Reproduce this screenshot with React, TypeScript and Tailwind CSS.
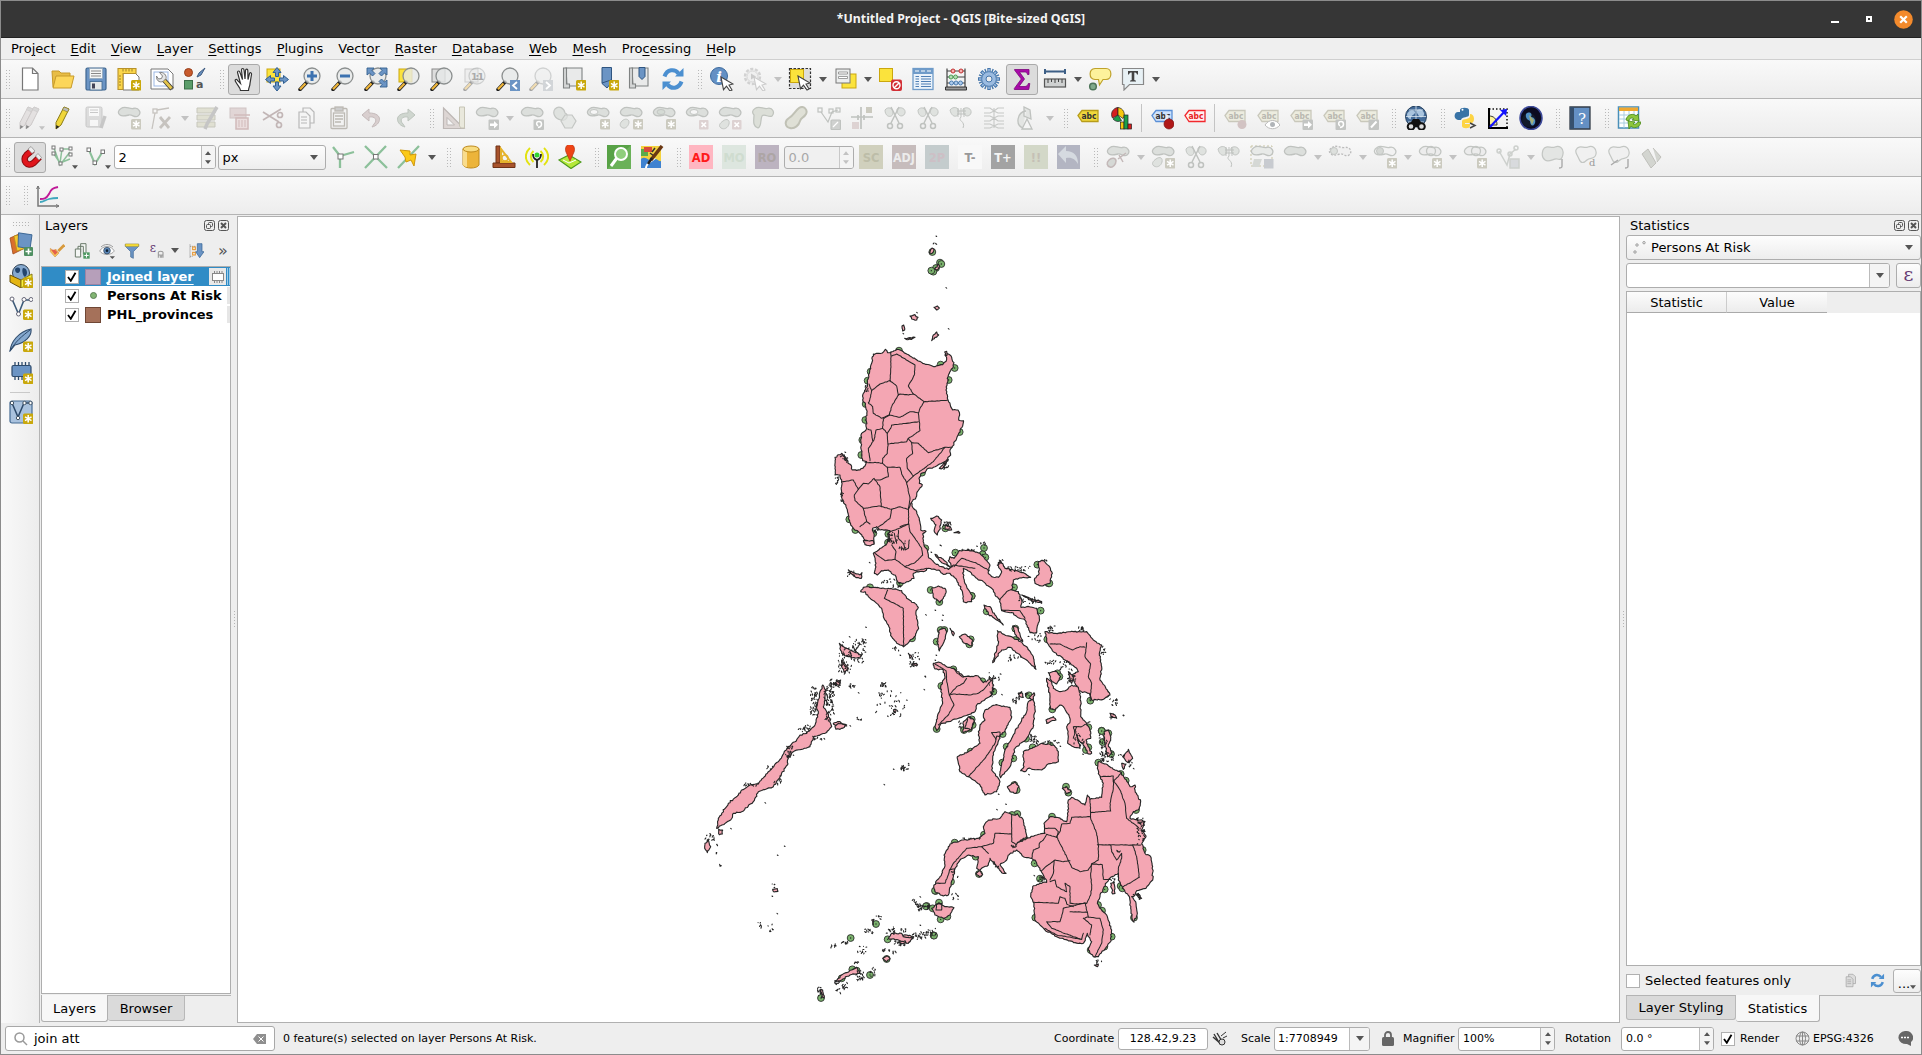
import React from "react";
import type { ReactNode } from "react";

/* ------------------------------------------------------------------ icons */

const Star = ({ x = 14, y = 13, c = "#c9a80c" }: { x?: number; y?: number; c?: string }) => (
  <g>
    <rect x={x} y={y} width="10.5" height="10.5" rx="1.5" fill={c} />
    <path
      d={`M${x + 5.2} ${y + 1.6}v7.4M${x + 2} ${y + 3.4}l6.5 3.8M${x + 8.5} ${y + 3.4}l-6.5 3.8`}
      stroke="#fff"
      strokeWidth="1.5"
    />
  </g>
);
const GB = "#cbcabf";
const Cross = () => (
  <g>
    <rect x="14" y="14" width="9.5" height="9.5" rx="1" fill="#ddd2d2" />
    <path d="M16.5 16.5l4.500 4.500M21 16.5l-4.500 4.500" stroke="#fff" strokeWidth="1.700" />
  </g>
);
const GArrow = ({ kind }: { kind: "move" | "rot" | "pen" }) => (
  <g>
    <rect x="13.500" y="13.500" width="10.500" height="10.500" rx="1" fill="#c3c5c3" />
    {kind === "move" && <path d="M15 17.500h4v-2.500l4 3.800-4 3.800v-2.500h-4z" fill="#fff" />}
    {kind === "rot" && <path d="M18 21.500c5-1 4-6 1-6s-3 3-1 4.500" stroke="#fff" strokeWidth="1.500" fill="none" />}
    {kind === "pen" && <path d="M16 21.500l5.500-6" stroke="#fff" strokeWidth="2" />}
  </g>
);
const Mag = ({ children, dim, x = 0 }: { children?: ReactNode; dim?: boolean; x?: number }) => (
  <g transform={`translate(${x} 0)`} opacity={dim ? 0.35 : 1}>
    <path d="M9 15L2 22.500" stroke="#222" strokeWidth="3.500" strokeLinecap="round" />
    <path d="M7.500 16.500L2 22.300" stroke="#f0b63a" strokeWidth="2.200" />
    <circle cx="14" cy="9" r="8" fill="#e6e8e8" stroke="#8b8f8f" strokeWidth="1.300" fillOpacity=".8" />
    {children}
  </g>
);
const BLOB = "M4 2.500C8-.5 12 3 16 2.500C22 1 25 7 21 10C18 12.500 15 8 12 9C8 10 5 11 3 9C.5 7 1 4.500 4 2.500Z";
const Blob = ({ children, fill = "#dcdfdc" }: { children?: ReactNode; fill?: string }) => (
  <g>
    <path d={BLOB} fill={fill} stroke="#bfc2bf" strokeWidth="1.300" />
    {children}
  </g>
);
const Tag = ({ f = "#ececdf", s = "#c9c8bb", t = "#b9b8b0", x = 0 }: { f?: string; s?: string; t?: string; x?: number }) => (
  <g transform={`translate(${x} 0)`}>
    <path d="M2 9.500L6 4.500h16v11H6z" fill={f} stroke={s} strokeWidth="1.300" />
    <text x="5.500" y="13" fontSize="8.500" fontWeight="bold" fill={t} fontFamily="DejaVu Sans" textLength="15" lengthAdjust="spacingAndGlyphs">abc</text>
  </g>
);
const Cursor = ({ x = 11, y = 10, s = "#444" }: { x?: number; y?: number; s?: string }) => (
  <path transform={`translate(${x} ${y})`} d="M0 0l12 7-4 1 3 5-2 1-3.500-4.800-3 3.500z" fill="#fff" stroke={s} strokeWidth="1.100" />
);
const Scissors = () => (
  <g fill="none" stroke="#bfc2bf" strokeWidth="1.500">
    <path d="M8 1l8 16M16 1L8 17" />
    <circle cx="7" cy="20" r="2.500" />
    <circle cx="17" cy="20" r="2.500" />
  </g>
);
const Refresh = ({ c = "#4b8fd0" }: { c?: string }) => (
  <g fill="none" stroke={c} strokeWidth="4">
    <path d="M3.500 9.500C6 2 14 1.500 17.500 6.500" />
    <path d="M20.500 14.500C18 22 10 22.500 6.500 17.500" />
    <path d="M14 9.500h8.500V1z" fill={c} stroke="none" />
    <path d="M10 14.500H1.500V23z" fill={c} stroke="none" />
  </g>
);
const Letter = ({ bg, c, t }: { bg: string; c: string; t: string }) => (
  <g>
    <rect width="24" height="24" fill={bg} />
    <text x="12" y="16.500" fontSize="11.500" fontWeight="bold" fill={c} textAnchor="middle" fontFamily="DejaVu Sans" textLength={t.length > 2 ? 22 : undefined} lengthAdjust="spacingAndGlyphs">{t}</text>
  </g>
);
const Roll = () => (
  <g fill="#e9eaea" stroke="#7f8282" strokeWidth="1.100">
    <path d="M4 1h16v18h-15z" />
    <path d="M1.500 1h3v16h3v4h-6z" fill="#d4d6d6" />
  </g>
);
const Pencil = ({ c = "#f0d63a", d = "#8a7a14", x = 0 }: { c?: string; d?: string; x?: number }) => (
  <g transform={`translate(${x} 0)`}>
    <path d="M13 1l5 2-8 16-5 4 0-6.500z" fill={c} stroke={d} strokeWidth="1" />
    <path d="M13 1l5 2-1.500 3-5-2.300z" fill="#bbb" stroke={d} strokeWidth=".6" />
    <path d="M5 23l.3-4 3 1.800z" fill="#222" />
  </g>
);

const I: Record<string, ReactNode> = {
  new: <path d="M4.500 1h10l5.500 5.500V23H4.500zM14.500 1v5.500H20" fill="#fff" stroke="#777" strokeWidth="1.200" />,
  open: (
    <g stroke="#c79a2a" strokeWidth="1">
      <path d="M1 4h7l2 2h9v14H2z" fill="#e8bd45" />
      <path d="M5 9h18l-3 12H2z" fill="#fcd65a" />
    </g>
  ),
  save: (
    <g>
      <rect x="2" y="1" width="20" height="22" rx="1.500" fill="#6b94c4" stroke="#3f668f" strokeWidth="1.200" />
      <rect x="5.500" y="1.500" width="13" height="10" fill="#f4f6f6" stroke="#8fa4b8" strokeWidth=".7" />
      <path d="M7 4h10M7 6.500h10M7 9h10" stroke="#888" strokeWidth="1" />
      <rect x="6" y="14.500" width="12" height="8.500" fill="#e6e8e8" stroke="#3f668f" strokeWidth=".8" />
      <rect x="8" y="16.500" width="3" height="5" fill="#445" />
    </g>
  ),
  layout: (
    <g>
      <path d="M6 6h12l4 4v13H6z" fill="#fff" stroke="#777" />
      <path d="M1 1.500h18v5H6v16H1z" fill="#fbd64a" stroke="#b8922a" strokeWidth="1.100" />
      <path d="M6 2v2.500M9 2v2.500M12 2v2.500M15 2v2.500M2 9h2M2 12h2M2 15h2M2 18h2" stroke="#8a6d1c" strokeWidth=".8" />
      <Star />
    </g>
  ),
  laymgr: (
    <g>
      <path d="M1 2h17l5 5v15H1z" fill="#fff" stroke="#777" />
      <rect x="4" y="5" width="14" height="14" fill="none" stroke="#9bb7e4" />
      <path d="M14 13l8 9" stroke="#333" strokeWidth="4.500" />
      <path d="M13.500 12.500l8 9" stroke="#e3c34a" strokeWidth="3" />
      <path d="M9.500 5.500l3 3.500-1 2.500-3 .5-2-3c-.5 4 2.500 7 6.500 5.500l3-3c1-3-2.500-7-6.500-6z" fill="#e4e4e4" stroke="#777" strokeWidth=".9" />
    </g>
  ),
  style: (
    <g>
      <circle cx="5.500" cy="5.500" r="4" fill="#c85a2c" stroke="#97401c" />
      <path d="M14 10l2-4 6-5-4 7z" fill="#6b94c4" stroke="#3d5a80" />
      <rect x="1.500" y="13.500" width="8" height="8.500" fill="#5b9d6a" stroke="#3b6e48" />
      <text x="13" y="21" fontSize="11" fill="#555" fontFamily="DejaVu Sans" fontWeight="bold">a</text>
    </g>
  ),
  hand: (
    <path d="M8.500 23.500c0-3-3-5-5-9-1-2 1-3 2-1l3 3-3-11c0-2 2-2 2.500 0l2.500 7-1-9.500c0-2 2.300-2 2.500 0l1 9 .5-8.500c.3-2 2.300-1.500 2.300 0l.2 9 1.500-6c.5-1.500 2.300-1 2 1l-1.500 9c0 3-1.500 4-1.500 7z" fill="#fff" stroke="#333" strokeWidth="1.200" />
  ),
  panto: (
    <g>
      <rect x="2" y="2" width="13" height="13" fill="#fbe33c" stroke="#cba70e" />
      <path d="M12 .5l4 5h-2.500v4h-3v-4H8zM12 24l4-5h-2.500v-4h-3v4H8zM.5 12.500l5-4V11h4v3h-4v2.500zM23.500 12.500l-5-4V11h-4v3h4v2.500z" fill="#6b94c4" stroke="#2f5f92" />
    </g>
  ),
  zin: <Mag><path d="M14 4v10M9 9h10" stroke="#3c72b0" strokeWidth="3" /></Mag>,
  zout: <Mag><path d="M9 9h10" stroke="#3c72b0" strokeWidth="3" /></Mag>,
  zfull: (
    <g>
      <Mag />
      <path d="M3 1h7l-2 2.500 3 3L8.500 9l-3-3L3 8zM23 1h-7l2 2.500-3 3L17.500 9l3-3L23 8zM23 20v-7l-2.500 2-3-3-2.500 2.500 3 3-2 2.500z" fill="#6b94c4" stroke="#33608f" strokeWidth=".9" />
    </g>
  ),
  zsel: <g><rect x="2" y="2" width="13" height="13" fill="#fbe33c" stroke="#cba70e" /><Mag /></g>,
  zlayer: <g><rect x="2" y="2" width="13" height="13" fill="#ddd" stroke="#888" /><Mag /></g>,
  z11: <g><rect x="2" y="2" width="13" height="13" fill="#eee" stroke="#ccc" /><Mag dim /><text x="8" y="13" fontSize="9.500" fontWeight="bold" fill="#aaa" fontFamily="DejaVu Sans" textLength="13">1:1</text></g>,
  zprev: <g><Mag /><rect x="14" y="13" width="10" height="11" fill="#6b94c4" /><path d="M21 15l-4 3.500 4 3.500" stroke="#fff" strokeWidth="1.800" fill="none" /></g>,
  znext: <g><Mag dim /><rect x="14" y="13" width="10" height="11" fill="#d2d5d8" /><path d="M17 15l4 3.500-4 3.500" stroke="#fff" strokeWidth="1.800" fill="none" /></g>,
  view: <g><Roll /><Star /></g>,
  bmnew: <g><path d="M7 .5h9.500v15L12 21l-5-4.500z" fill="#6b94c4" stroke="#2f5580" /><path d="M7 16l9-3" stroke="#2f5580" /><Star /></g>,
  bm: <g><Roll /><path d="M11 .5h6v9l-3 3-3-3z" fill="#6b94c4" stroke="#2f5580" /></g>,
  refresh: <Refresh />,
  identify: <g><circle cx="9" cy="9" r="8.500" fill="#6490c4" stroke="#3f6c9f" /><text x="6.200" y="14.500" fontSize="15" fontWeight="bold" fontStyle="italic" fill="#fff" fontFamily="DejaVu Serif">i</text><Cursor /></g>,
  action: <g opacity=".7"><circle cx="9.500" cy="9.500" r="7.500" fill="#ededed" stroke="#c4c4c4" strokeWidth="2.500" strokeDasharray="3 1.700" /><circle cx="9.500" cy="9.500" r="5.500" fill="#eee" stroke="#ccc" /><path d="M8 6.500l5 3-5 3z" fill="#bbb" /><Cursor s="#bbb" /></g>,
  select: <g><rect x="1.500" y="1.500" width="21" height="20" fill="#ddd" stroke="#333" strokeWidth="1.200" strokeDasharray="2.500 1.500" /><rect x="2.500" y="2.500" width="13" height="13" fill="#fbe33c" stroke="#cba70e" /><Cursor x={10} y={9} /></g>,
  selform: <g><rect x="9" y="7" width="14" height="14" fill="#fbe33c" stroke="#cba70e" /><rect x="3" y="2" width="14" height="14" fill="#eceeee" stroke="#777" /><path d="M5.500 5h9v2h-9zM5.500 9.500h9v2h-9z" fill="#fff" stroke="#888" strokeWidth=".8" /></g>,
  desel: <g><rect x="1.500" y="1.500" width="13" height="13" fill="#fbe33c" stroke="#cba70e" /><rect x="13" y="12.500" width="11" height="11.500" rx="2" fill="#d22f35" /><circle cx="18.500" cy="18.300" r="3.500" fill="none" stroke="#fff" strokeWidth="1.400" /><path d="M16 21l5-5" stroke="#fff" strokeWidth="1.400" /></g>,
  table: <g><rect x="2" y="1.500" width="20" height="21" fill="#eaf2fa" stroke="#6f9bc9" strokeWidth="1.300" /><path d="M2 1.500h20V7H2z" fill="#6f9bc9" /><path d="M4 4h4M10 4h4M16 4h4" stroke="#fff" /><path d="M4.500 9.500H8M10 9.500h10M4.500 12H8M10 12h10M4.500 14.500H8M10 14.500h10M4.500 17H8M10 17h10M4.500 19.500H8M10 19.500h10" stroke="#4f7fb4" /></g>,
  abacus: (
    <g>
      <path d="M3 1.500v19M21 1.500v19M3 4h18M3 10h18M3 16h18" stroke="#444" strokeWidth="1.200" fill="none" />
      <path d="M1.500 20h21v3h-21z" fill="#999" stroke="#333" />
      <g fill="#f6b2b2" stroke="#c23030"><circle cx="9" cy="4" r="2" /><circle cx="17" cy="4" r="2" /></g>
      <g fill="#b5dcb5" stroke="#4f9d56"><circle cx="7" cy="10" r="2" /><circle cx="11.500" cy="10" r="2" /></g>
      <g fill="#aecbec" stroke="#4b7cb0"><circle cx="7.500" cy="16" r="2" /><circle cx="12" cy="16" r="2" /><circle cx="16.500" cy="16" r="2" /></g>
    </g>
  ),
  gear: <g><path d="M12 1v22M1 12h22M4.200 4.200l15.600 15.600M19.800 4.200L4.200 19.800" stroke="#4576ab" strokeWidth="3.400" /><path d="M7.800 2l8.400 20M16.200 2L7.800 22M2 7.800l20 8.400M2 16.200l20-8.400" stroke="#4576ab" strokeWidth="1.400" /><path d="M12 2v20M2 12h20M5 5l14 14M19 5L5 19" stroke="#9bbbe0" strokeWidth="1.600" /><circle cx="12" cy="12" r="7.300" fill="#9bbbe0" stroke="#4576ab" strokeWidth=".8" /><circle cx="12" cy="12" r="3" fill="#eee" stroke="#4576ab" /></g>,
  sigma: <path d="M4.500 2.500h14.500v5h-1.500c-.5-2-1.500-2.500-3-2.500h-5l5 7-5.500 7.500h6c1.500 0 2.800-1 3.300-3h1.500l-1 6h-14.500v-1l7-9.500-6.800-9z" fill="#a80aa8" stroke="#7b067b" strokeWidth=".8" />,
  measure: <g><path d="M2 4.500h20M2 2v5M22 2v5" stroke="#3d5f86" strokeWidth="2" /><rect x="1.500" y="12" width="21" height="8" fill="#cfd1d1" stroke="#555" strokeWidth="1.200" /><path d="M5 12v4M8.500 12v3M12 12v4M15.500 12v3M19 12v4" stroke="#444" /></g>,
  tips: <g><path d="M7 1.500h11c6.500 0 6.500 11 0 11h-3l-3.500 5.500-1-5.500H7C.5 12 .5 2 7 1.500z" fill="#fdf29b" stroke="#bfa22a" strokeWidth="1.200" /><circle cx="5" cy="19.500" r="3.300" fill="#7fa98a" stroke="#4d7458" strokeWidth="1.500" /></g>,
  text: <g><path d="M1.500 1.500h21v16H8.500L3 23v-5.500H1.500z" fill="#e8f1f5" stroke="#888" strokeWidth="1.200" /><path d="M7 4h10v3.500h-1C15.500 6 15 5.500 13.300 5.500V13l1.700.7v.8H9v-.8l1.700-.7V5.500C9 5.500 8.500 6 8 7.500H7z" fill="#444" /></g>,
  /* editing */
  edits: <g opacity=".5"><Pencil c="#d5cfcf" d="#a59d9d" x={-3} /><Pencil c="#d5cfcf" d="#a59d9d" x={3} /></g>,
  pencil: <Pencil />,
  savee: <g opacity=".4"><rect x="2" y="1" width="16" height="20" rx="1.500" fill="#bbb" stroke="#888" /><rect x="5" y="2" width="10" height="8" fill="#fff" /><path d="M6 4h8M6 6.500h8" stroke="#888" /><rect x="6" y="14" width="8" height="6" fill="#fff" /><path d="M21 10l-4 12" stroke="#888" strokeWidth="3.500" /></g>,
  addpoly: <Blob><Star c={GB} /></Blob>,
  vertex: <g fill="none" stroke="#c6c3bf" strokeWidth="1.300"><rect x="3" y="3" width="4" height="4" /><path d="M5 7L2 23M7 4l12-2" /><path d="M10 22L20 11M19 22L10 11" strokeWidth="2.800" /></g>,
  attrs: <g opacity=".8"><path d="M2 2h18v5H2zM2 9h18v5H2zM2 16h18v5H2z" fill="#dcdccb" stroke="#bdbdb0" /><path d="M22 1L12 18l-2 5" stroke="#bbb" strokeWidth="3.500" /></g>,
  del: <g opacity=".7"><rect x="2" y="2" width="16" height="10" fill="#d9c9c9" stroke="#c0b0b0" /><path d="M6 9h16M8 12h12v11H8z" fill="#e8d6d6" stroke="#c3a4a4" strokeWidth="1.500" /><path d="M11 14v7M14 14v7M17 14v7" stroke="#c3a4a4" /></g>,
  cut: <g fill="none" stroke="#c2b6b6" strokeWidth="1.700"><path d="M2 6l16 10M2 14L20 3" /><circle cx="19" cy="9" r="2.500" /><circle cx="18" cy="19" r="2.500" /></g>,
  copy: <g fill="#f5f5f5" stroke="#b8b8b8" strokeWidth="1.200"><path d="M9 2h7l4 4v11H9z" /><path d="M5 6h7l4 4v12H5z" /><path d="M7 11h6M7 14h6M7 17h6" /></g>,
  paste: <g fill="#f2f2f2" stroke="#bcb9b3" strokeWidth="1.300"><rect x="4" y="2.500" width="16" height="20" rx="1" /><rect x="8" y="1" width="8" height="4" fill="#ccc" /><rect x="6.500" y="7" width="11" height="13" /><path d="M8 10h8M8 13h8M8 16h6" /></g>,
  undo: <path d="M9 3L2 9l7 6v-4c6-1 9 3 5 7l-2 3c9-2 12-14-3-14z" fill="#d9cfcf" stroke="#c4baba" />,
  redo: <path d="M15 3l7 6-7 6v-4c-6-1-9 3-5 7l2 3C3 19 0 7 15 7z" fill="#cfd6cf" stroke="#bdc4bd" />,
  advdig: <g><path d="M1.500 2v20.500H22z" fill="#ddd6d4" stroke="#bdb7b5" strokeWidth="1.200" /><path d="M5 11.500V19h7.500z" fill="#f5f5f5" stroke="#bdb7b5" /><path d="M17.500 1h5v21h-3.500l-1.500-2z" fill="#e9e8dc" stroke="#c6c4b5" /></g>,
  movef: <Blob><GArrow kind="move" /></Blob>,
  rotf: <Blob><GArrow kind="rot" /></Blob>,
  simp: <g fill="#dfe2df" stroke="#c3c6c3" strokeWidth="1.200"><path d="M2 3c4-4 9-1 10 4 5 2 1 9-4 7-6-1-9-7-6-11z" /><path d="M12 9h7l4 6-4 7h-7l-4-7z" fillOpacity=".7" /></g>,
  ring: <Blob><ellipse cx="8" cy="6" rx="4" ry="2.500" fill="#f6f6f6" stroke="#c3c6c3" /><Star c={GB} /></Blob>,
  part: <Blob><path d="M3 15c3-3 7-2 7 1s-3 7-6 6-4-4-1-7z" fill="#dfe2df" stroke="#c3c6c3" /><Star c={GB} /></Blob>,
  fring: <Blob><ellipse cx="9" cy="6" rx="4" ry="2.500" fill="#d5dbd5" stroke="#c3c6c3" /><Star c={GB} /></Blob>,
  dring: <Blob><ellipse cx="9" cy="6" rx="4" ry="2.500" fill="#f6f6f6" stroke="#c3c6c3" /><Cross /></Blob>,
  dpart: <Blob><path d="M5 15c4-3 7-1 6 3s-5 6-8 4-1-5 2-7z" fill="#dfe2df" stroke="#c3c6c3" /><Cross /></Blob>,
  reshape: <path d="M4 2.500C8-.5 12 3 16 2.500C22 1 24 7 21 10C18 12 13 7 11 10c-2 4 0 10-4 12C1 20 3 14 3 9 1 7 1 4.500 4 2.500Z" fill="#dcdfd8" stroke="#bfc3bd" strokeWidth="1.200" />,
  offset: <path d="M15 2c5-3 9 2 7 6s-5 3-6 7-5 8-10 7-6-7-1-10 6-7 10-10z" fill="#dfe0d6" stroke="#c0c1b5" strokeWidth="2" />,
  splitv: <g fill="none" stroke="#bfc2bf" strokeWidth="1.200"><path d="M4 6l7 10 4-10 6-2" /><rect x="1" y="2" width="4" height="4" /><rect x="12" y="3" width="4" height="4" /><rect x="19" y="2" width="4" height="4" /><rect x="14" y="14" width="9.500" height="9.500" rx="1" fill="#cfd1cf" /><path d="M16 21l5-5" stroke="#fff" /></g>,
  mergex: <g fill="none" stroke="#bfc2bf" strokeWidth="1.700"><path d="M11 1v22M1 11h22M14 9v5M8 9v5" /><rect x="2" y="16" width="7" height="7" fill="#ddd2d2" stroke="none" /><rect x="16" y="1" width="6" height="6" fill={GB} stroke="none" /></g>,
  sc1: <g><path d="M2 4c3-4 8-2 8 3s-8 5-8-3zM14 3c4-3 9 0 8 4s-8 5-8-4z" fill="#dfe2df" stroke="#c3c6c3" /><Scissors /></g>,
  join: <g><path d="M1 4c3-4 9-3 9 2s-7 7-9-2zM14 3c4-3 9 0 8 4s-8 5-8-4z" fill="#dfe2df" stroke="#c3c6c3" /><path d="M9 2v9M12 2v9M15 2v9M8 5h9M8 8h9M12 11c-4 4 5 4 2 11" fill="none" stroke="#bfc2bf" /></g>,
  vals: <g fill="none" stroke="#c6c8c6" strokeWidth="1.100"><path d="M2 2h6l4 3 4-3h6M2 7h6l4-2 4 2h6M2 10h6l4 2 4-2h6M2 15h6l4-3 4 3h6M2 18h6l4 2 4-2h6M2 22h6l4-2 4 2h6M12 2v20" /></g>,
  rotp: <g fill="none" stroke="#bfc2bf" strokeWidth="1.300"><path d="M8 22C0 19 2 6 11 5M9 1v9l7 3-1-9z" fill="#e3e5e3" /><path d="M12 13l-5 10h10z" fill="#f5f5f5" /></g>,
  /* labels */
  abc: <Tag f="#f0d83c" s="#b79c1a" t="#333" />,
  diag: <g stroke="#222" strokeWidth=".7"><path d="M9 9V1.500A7 7 0 0 0 3.500 12z" fill="#d41f1f" /><path d="M9 9l-5 4a7 7 0 0 0 8.500 1.500z" fill="#1ba04a" /><path d="M9 9V1.500a7 7 0 0 1 5 11z" fill="#f6c80f" /><rect x="11.500" y="16" width="3.500" height="7" fill="#f6c80f" /><rect x="15" y="9" width="4" height="14" fill="#1ba04a" /><rect x="19" y="18" width="3.500" height="5" fill="#d41f1f" /></g>,
  abcpin: <g><Tag f="#cfe2fb" s="#5a8fd6" t="#333" /><path d="M17 9v7" stroke="#eee" strokeWidth="3" /><circle cx="19" cy="18" r="5" fill="#b01818" stroke="#7d0f0f" strokeWidth=".7" /></g>,
  abcred: <Tag f="#fff0f0" s="#f2282d" t="#e81c22" />,
  abcp: <g><Tag /><circle cx="19" cy="18.500" r="4.500" fill="#d2c3c3" /></g>,
  abce: <g><Tag /><path d="M9 19c4-6 11-6 15 0-4 5-11 5-15 0z" fill="#fff" stroke="#bbb" /><circle cx="16.500" cy="18.500" r="2.500" fill="#b0b4b8" /></g>,
  abcm: <g><Tag /><GArrow kind="move" /></g>,
  abcr: <g><Tag /><GArrow kind="rot" /></g>,
  abcw: <g><Tag /><GArrow kind="pen" /></g>,
  meta: <g><circle cx="12" cy="10.500" r="10.500" fill="#436a97" stroke="#24405f" /><path d="M3 8c3-5 7-4 8-2s-4 3-4 6-4 0-4-4zM13 4c3-2 6 0 7 3s-3 6-5 3-3-4-2-6z" fill="#a9c4de" /><path d="M2 10.500h20M12 0v21M5 4h14M4 16h16" stroke="#d8e4ef" strokeWidth=".8" /><path d="M9 13h6l5 8H4z" fill="#111" /><circle cx="7" cy="20.500" r="3.300" fill="#ddd" stroke="#111" strokeWidth="2" /><circle cx="17.500" cy="20.500" r="3.300" fill="#ddd" stroke="#111" strokeWidth="2" /></g>,
  python: <g><path d="M7 6.500V4c0-3 9-3 9 0v5c0 3-7 1-8 5H5c-5-1-4-8 0-8h7z" fill="#3873a6" /><path d="M17 8c5 0 5 8 2 9h-7v1h5v2c0 3-8 3-8 0v-5c1-3 8-1 8-5z" fill="#fdd444" /><circle cx="9.500" cy="3.800" r="1" fill="#fff" /><path d="M17 17l5 2.500-5 2.500" stroke="#444" strokeWidth="1.500" fill="none" /></g>,
  graph: <g><path d="M3 10c4 0 8 2 8 9H3z" fill="#fdf39b" stroke="#333" /><path d="M3 3h18v18" fill="none" stroke="#111" strokeWidth="1.500" strokeDasharray="1.500 2" /><path d="M3 2v20h19" stroke="#000" strokeWidth="2" fill="none" /><path d="M4 21L20 4" stroke="#1414ff" strokeWidth="2.200" /><path d="M14 4l7-1-1 7z" fill="#1414ff" /></g>,
  globe: <g><ellipse cx="12" cy="12" rx="11" ry="11.500" fill="#0b0b20" stroke="#3d4a9a" strokeWidth="1.500" /><circle cx="10" cy="14" r="7" fill="#121a2a" /><path d="M7 8c3-3 7-1 5 3 3 0 5 3 4 6-2 5-5 2-5-2-2-1-5-3-4-7z" fill="#4f8fc4" /><path d="M10 9l5 5-2 5-2-5z" fill="#a5b07a" /></g>,
  help: <g><path d="M2 1h20v22H2z" fill="#6490c4" stroke="#333c48" strokeWidth="1.300" /><path d="M2 1h4v22H2z" fill="#36506e" /><text x="14" y="17.500" fontSize="15" fill="#fff" textAnchor="middle" fontFamily="DejaVu Serif">?</text></g>,
  tableload: <g><rect x="1.500" y="1" width="20" height="21" fill="#fff" stroke="#4a8fb8" strokeWidth="1.500" /><rect x="2" y="1.500" width="19" height="3.500" fill="#f0a830" /><path d="M2 9h19M2 13h19M2 17h19M7 5v17M12 5v17M17 5v17" stroke="#a8cde0" /><path d="M9 14c1-6 8-7 10-4l2-2 1 7-7-1 2-1c-2-2-5-1-5 2zM24 16c-1 6-8 7-10 4l-2 3-1-8 7 1-2 2c2 1 4 0 5-2z" fill="#8cc63c" stroke="#4b8a1a" strokeWidth=".8" /></g>,
  /* snapping */
  magnet: <g><path d="M13 5L7 10C2 15 8 23 14 18l6-6" stroke="#8c0c10" strokeWidth="6.500" fill="none" transform="translate(1.500 0)" /><path d="M13 5L7 10C2 15 8 23 14 18l6-6" stroke="#e0161c" strokeWidth="4.500" fill="none" transform="translate(1.500 0)" /><path d="M13 1.500l4 4.500-3 2.500-4-4.500zM20 8.500l3.500 4-2.500 2.500-3.500-4z" fill="#eee" stroke="#888" strokeWidth=".7" /></g>,
  snapall: <g fill="none"><path d="M3 3l6 17 10-13M3 9l6 9 2-14h8M9 18l10-4" stroke="#8cc09a" strokeWidth="1.500" /><g fill="#fff" stroke="#777"><rect x="1" y="1" width="3" height="3" /><rect x="1" y="7" width="3" height="3" /><rect x="9" y="3" width="3" height="3" /><rect x="18" y="2" width="3" height="3" /><rect x="18" y="8" width="3" height="3" /><rect x="8" y="17" width="3" height="3" /></g></g>,
  snapv: <g fill="none"><path d="M5 5l6 14L19 6" stroke="#8cc09a" strokeWidth="2" /><g fill="#fff" stroke="#777"><rect x="3" y="3" width="3.500" height="3.500" /><rect x="17" y="5" width="3.500" height="3.500" /><rect x="9" y="16" width="3.500" height="3.500" /></g></g>,
  topo: <g><path d="M2 2l7 9 14-4M9 11v12" stroke="#8cc09a" strokeWidth="2.300" fill="none" /><rect x="7" y="9" width="5" height="5" fill="#fff" stroke="#777" /></g>,
  inter: <g><path d="M1 1l22 22M22 1L1 23" stroke="#8cc09a" strokeWidth="2.300" /><rect x="9.500" y="9.500" width="4.500" height="4.500" fill="#fff" stroke="#777" /></g>,
  trace: <g><path d="M22 1L1 23" stroke="#8cc09a" strokeWidth="2.300" /><path d="M3 5l10 1v4l6-1-2 12-3-6-5 2-1-5z" fill="#fbc918" stroke="#cf970c" /></g>,
  db: <g><path d="M4 4v16c2 4 14 4 16 0V4z" fill="#ecb43a" stroke="#bf8a1c" /><path d="M8 5v17c-2-.3-3.500-1-4-2V4z" fill="#f9dc8c" /><ellipse cx="12" cy="4" rx="8" ry="3" fill="#f8dc80" stroke="#bf8a1c" /></g>,
  carp: <g><path d="M4 1h4v17H4z" fill="#a8532c" stroke="#6f3216" /><path d="M1 18h22v4.500H1z" fill="#a8532c" stroke="#6f3216" /><path d="M9 17V4l10 13z" fill="none" stroke="#e5b32c" strokeWidth="2" /><circle cx="13" cy="13" r="3" fill="none" stroke="#e5b32c" strokeWidth="1.300" /></g>,
  radio: <g fill="none" stroke="#e2e210" strokeWidth="2"><path d="M5 3C-.5 8-.5 15 5 20M8.500 6C5 9 5 14 8.500 17M19 3c5.500 5 5.500 12 0 17M15.500 6c3.500 3 3.500 8 0 11" /><path d="M8 9c0 5 2 5 4 6v8M16 9c0 5-2 5-4 6" stroke="#222" strokeWidth="1.800" /><circle cx="12" cy="10" r="2.500" fill="#2fd42f" stroke="none" /></g>,
  pin: <g><path d="M1 15l10-5 12 7-10 6.500z" fill="#b5e83a" stroke="#4e9a1e" strokeWidth="1.200" /><path d="M5 15l6 3 7-3" fill="none" stroke="#fff" /><path d="M12 16L8 7a4.500 5.500 0 1 1 8 0z" fill="#ee4416" stroke="#b5300c" strokeWidth=".7" /></g>,
  gsearch: <g><rect width="24" height="24" fill="#58a246" /><path d="M0 24L24 0v24z" fill="#7cc06a" fillOpacity=".5" /><circle cx="14" cy="9" r="6" fill="#8fce7c" stroke="#fff" strokeWidth="2" /><path d="M9.500 13.500L4 21" stroke="#fff" strokeWidth="3" /></g>,
  paint: <g><rect x="1" y="1" width="20" height="22" fill="#f3d23e" /><path d="M1 4h7v7H1z" fill="#5cab4a" /><path d="M4 2h8v5H4z" fill="#d84a3a" /><path d="M1 14c6-4 8 4 12 1s5 2 8 1v7H1z" fill="#3f82d0" /><path d="M6 23c0-5 5-6 9-10" stroke="#fff" strokeWidth="2" fill="none" /><path d="M10 8l4 3M15 3l-3 4" stroke="#333" strokeWidth="1.500" /><path d="M22 1L11 15" stroke="#6a3712" strokeWidth="3.500" /><path d="M12 13l-4 6" stroke="#222" strokeWidth="2.500" /></g>,
  AD: <Letter bg="#ffb6c1" c="#ff1a1a" t="AD" />,
  MO: <Letter bg="#dde6df" c="#cfdccf" t="MO" />,
  RO: <Letter bg="#bcb3c0" c="#ada5a5" t="RO" />,
  SC: <Letter bg="#d0d0bd" c="#bdbda8" t="SC" />,
  ADJ: <Letter bg="#c6bcbc" c="#ececec" t="ADJ" />,
  P2: <Letter bg="#c4cccd" c="#cdbfc5" t="2P" />,
  Tm: <Letter bg="#f8f8f8" c="#999" t="T-" />,
  Tp: <Letter bg="#a3a3a3" c="#f4f4f4" t="T+" />,
  EX: <Letter bg="#d3d8c8" c="#c5c0b5" t="!!" />,
  back: <g><rect width="23" height="24" fill="#b3b5c2" /><path d="M1 9l8-8v5c8 0 12 5 12 13-3-5-6-7-12-6v5z" fill="#d5dae0" /></g>,
  sh1: <Blob><path d="M3 15c3-3 7-2 7 1s-3 7-6 6-4-4-1-7zM12 14l8-6M13 10l4 7" fill="#d5d8d5" stroke="#c3b8b8" strokeWidth="1.500" /></Blob>,
  sh2: <Blob><path d="M5 14c4-3 7-1 6 3s-5 6-8 4-1-5 2-7z" fill="#dfe2df" stroke="#c3c6c3" /><Star c={GB} /></Blob>,
  sh3: <g><rect x="1" y="1" width="21" height="20" fill="none" stroke="#c9c5a5" strokeDasharray="2 2" /><Blob fill="#e8eae8" /><path d="M4 14h8l-3 8H2z" fill="#d5d8d5" /><rect x="14" y="14" width="9.500" height="9.500" fill="#c8cbd0" /></g>,
  sh4: <Blob />,
  sh5: <g><path d={BLOB} fill="#f0f0f0" stroke="#bbb" strokeDasharray="2 1.500" strokeWidth="1.300" /><circle cx="6" cy="6" r="3.500" fill="#dde0dd" stroke="#c3c6c3" /></g>,
  sh6: <g><path d={BLOB} fill="#f2f2f2" stroke="#c3c6c3" strokeWidth="1.300" /><circle cx="7" cy="6" r="3.500" fill="#d5d8d5" stroke="#c3c6c3" /><Star c={GB} /></g>,
  sh7: <g><path d={BLOB} fill="#ececec" stroke="#c3c6c3" strokeWidth="1.300" /><circle cx="13" cy="6" r="4.500" fill="none" stroke="#c3c6c3" strokeWidth="1.300" /><Star c={GB} /></g>,
  sh8: <g fill="none" stroke="#cdd0cd" strokeWidth="1.500"><path d="M3 6l8 14 3-11 6-5" /><circle cx="3" cy="6" r="2" /><circle cx="14" cy="9" r="2" /><circle cx="20" cy="3" r="2" /><rect x="14" y="14" width="9" height="9" fill="#d8dadd" /></g>,
  sh9: <g><path d="M2 5c3-6 8-1 12-3s9 1 8 7-3 6-6 5-8 4-12 1-3-7-2-10z" fill="#e3e5e3" stroke="#c3c6c3" strokeWidth="1.200" /><path d="M21 14v7c0 2-1 2-3 2" fill="none" stroke="#aaa" strokeWidth="1.400" /></g>,
  sh10: <g><path d="M2 5c3-6 8-1 12-3s9 1 8 7-6 3-9 6-6 4-8-1-4-6-3-9z" fill="#f0f0f0" stroke="#c3c6c3" strokeWidth="1.200" /><text x="15" y="21" fontSize="10" fill="#999" fontFamily="DejaVu Serif">d</text></g>,
  sh12: <g><path d="M2 5c3-6 8-1 12-3s9 1 8 7-6 3-9 6-6 4-8-1-4-6-3-9z" fill="#f0f0f0" stroke="#c3c6c3" strokeWidth="1.200" /><path d="M21 14v7c0 2-1 2-3 2M4 20l7-5" fill="none" stroke="#aaa" strokeWidth="1.400" /></g>,
  sh11: <g fill="#d3d5d0" stroke="#c0c0bb"><path d="M2 9l6-5 8 14-5 5zM13 3l8 9-4 5" /></g>,
  chart: <g fill="none"><path d="M2 2v20h21" stroke="#777" strokeWidth="1.500" /><path d="M2 2l-1.500 3M2 2l1.500 3M23 22l-3-1.500M23 22l-3 1.500" stroke="#777" /><path d="M4 15c4 0 6 0 9-5 2-5 4-6 9-7" stroke="#c01a98" strokeWidth="2" /><path d="M4 18c4 0 5-2 9-3s5-1 9-1" stroke="#3fa7bd" strokeWidth="1.800" /></g>,
  /* data sources */
  addlayer: <g><path d="M1 6l9-4 6 14-12 6z" fill="#d96f2c" stroke="#a0491a" strokeWidth=".8" /><path d="M5 4l9-2 3 14-9 3z" fill="#f4c82c" stroke="#b8901a" strokeWidth=".8" /><path d="M9.500.8l13.500 2-2 14-12-2z" fill="#6b94c4" stroke="#33608f" strokeWidth=".9" /><rect x="15" y="15" width="9" height="9" rx="1" fill="#4f8f62" /><path d="M19.500 16.500v6M16.500 19.500h6" stroke="#fff" strokeWidth="1.600" /></g>,
  gpkg: <g><circle cx="12" cy="9" r="8.500" fill="#86a9cf" stroke="#345" /><path d="M6 5c3-3 6-1 5 2s-5 3-5-2zM14 4c4 0 5 5 3 8s-5-5-3-8z" fill="#23456e" /><path d="M1 11l11 5v8L1 18z" fill="#e4b512" stroke="#6b5208" /><path d="M12 16l11-6v8l-11 6z" fill="#f8f03c" stroke="#8a7a14" /><Star y={13.5} /></g>,
  shp: <g fill="none"><path d="M3 3l6.500 15L15 4h7" stroke="#3d5a78" strokeWidth="1.600" /><g fill="#fff" stroke="#667"><circle cx="3" cy="3" r="2" /><circle cx="9.500" cy="18" r="2" /><circle cx="15" cy="3.500" r="2" /><circle cx="22" cy="3.500" r="2" /></g><Star y={13.5} /></g>,
  feather: <g><path d="M1 23C2 14 9 4 22 1c1 7-6 14-16 16z" fill="#86a9cf" stroke="#2d4a6b" strokeWidth="1.100" /><path d="M1 23C6 14 13 8 21 2" fill="none" stroke="#2d4a6b" /><Star y={13.5} /></g>,
  mem: <g><path d="M6 2v4M9.500 2v4M13 2v4M16.500 2v4M20 2v4M6 15v5M9.500 15v5M13 15v5" stroke="#2d4a6b" strokeWidth="1.300" /><rect x="3" y="5.500" width="19" height="11" rx="1.500" fill="#6b94c4" stroke="#2d4a6b" strokeWidth="1.200" /><Star y={13.5} /></g>,
  virt: <g><rect x="1" y="1" width="22" height="22" rx="2" fill="#a9c2de" stroke="#456a92" strokeWidth="1.200" /><path d="M3 3l6 14L15 3h7" stroke="#2d4a6b" strokeWidth="1.500" fill="none" /><g fill="#fff" stroke="#456"><circle cx="3" cy="3" r="1.700" /><circle cx="9" cy="18" r="1.700" /><circle cx="15.500" cy="3" r="1.700" /><circle cx="21.500" cy="3" r="1.700" /></g><Star y={13.5} /></g>,
  /* layer panel */
  brush: <g><path d="M23 3l-9 9" stroke="#d89a3c" strokeWidth="4" /><path d="M2 8l5 4 3-3 5 6-6 6-7-8z" fill="#f5c95a" stroke="#c67a30" strokeWidth=".7" /><path d="M3 10l6 8 4-4-4-4z" fill="#e4604a" /></g>,
  group: <g fill="none" stroke="#6a7a6a" strokeWidth="1.500"><path d="M10 14V1h8v13M6 17V5h8v12" fill="#f4f6f4" /><path d="M2 9h8v12H2z" fill="#f4f6f4" /><rect x="14" y="14" width="9.500" height="9.500" fill="#4f9862" stroke="none" /><path d="M18.700 15.500v6.500M15.500 18.700h6.500" stroke="#fff" /></g>,
  eye: <g><path d="M1 12C6 3 18 3 23 12 18 19 6 19 1 12z" fill="#fff" stroke="#999" strokeWidth="1.300" /><circle cx="12" cy="11.500" r="5" fill="#5b87b8" stroke="#345" /><circle cx="12" cy="11.500" r="2" fill="#123" /><path d="M3 6C8 1 16 1 21 6" stroke="#999" fill="none" strokeWidth="1.500" /><path d="M16 20h8l-4 4z" fill="#555" /></g>,
  filter: <g><path d="M2 2h20v3l-8 8v10l-4-2v-8L2 5z" fill="#6b94c4" stroke="#3f6894" /><path d="M2 1.500h20V5H2z" fill="#fbe33c" stroke="#b8981a" strokeWidth=".8" /></g>,
  eps: <g><text x="1" y="14" fontSize="18" fill="#653a72" fontFamily="DejaVu Serif">ε</text><path d="M14 22v-8c0-2 7-2 7 0v8M14 18h3v4M21 18h-2v4" fill="none" stroke="#999" strokeWidth="1.600" /></g>,
  expand: <g><path d="M3 2v20M3 5h8M3 20h4" stroke="#777" fill="none" strokeDasharray="2 1" /><rect x="7" y="6" width="4" height="4" fill="none" stroke="#e89224" strokeWidth="1.500" /><rect x="7" y="14" width="4" height="4" fill="none" stroke="#e89224" strokeWidth="1.500" /><path d="M14 1h7v12h3l-6.500 9-6-9h2.500z" fill="#6b94c4" stroke="#2f5f92" /></g>,
};

const Svg = ({ n, s = 24 }: { n: string; s?: number }) => (
  <svg width={s} height={s} viewBox="0 0 24 24" className="shrink-0">{I[n]}</svg>
);

/* ---------------------------------------------------------------- toolbars */

const Down = ({ dim, small }: { dim?: boolean; small?: boolean }) => (
  <svg width={small ? 6 : 8} height={small ? 4 : 5} viewBox="0 0 8 5" className="shrink-0">
    <path d="M0 0h8L4 5z" fill={dim ? "#c2c2c2" : "#555"} />
  </svg>
);
const Handle = () => (
  <div className="flex h-[19px] w-[16px] shrink-0 justify-center gap-[2px] pl-[5px]">
    <div className="w-px bg-[repeating-linear-gradient(to_bottom,#b9b9b9_0_1px,transparent_1px_3px)]" />
    <div className="w-px bg-[repeating-linear-gradient(to_bottom,#b9b9b9_0_1px,transparent_1px_3px)]" />
  </div>
);
const Sep = () => <div className="flex w-[7.500px] shrink-0 justify-center"><div className="h-7 w-px bg-[#c4c4c4]" /></div>;

const Tool = ({ spec }: { spec: string }) => {
  const name = spec.replace(/[*>~!]+$/, "");
  const flags = spec.slice(name.length);
  return (
    <>
      <div className="relative flex h-[38px] w-[33px] shrink-0 items-center justify-center">
        {flags.includes("*") ? (
          <div className="flex h-[31px] w-8 items-center justify-center rounded-[3px] border border-[#aaa] bg-[#dcdcdc]"><Svg n={name} /></div>
        ) : (
          <Svg n={name} />
        )}
        {flags.includes("~") && <div className="absolute right-[2px] bottom-[7px] flex"><Down small dim={flags.includes("!")} /></div>}
      </div>
      {flags.includes(">") && <div className="flex w-3 shrink-0 items-center justify-center"><Down dim={flags.includes("!")} /></div>}
    </>
  );
};
const Tools = ({ list }: { list: string }) => (
  <>
    {list.split(" ").map((s, i) => (s === "|" ? <Handle key={i} /> : s === "-" ? <Sep key={i} /> : <Tool key={i} spec={s} />))}
  </>
);
const Bar = ({ children, h }: { children: ReactNode; h?: string }) => (
  <div className={`${h ?? "h-[39px]"} flex w-full shrink-0 items-center overflow-hidden border-b border-[#b4b4b4] bg-linear-to-b from-[#f9f9f9] to-[#ededed]`}>
    <div className="-ml-[3.500px] flex items-center">{children}</div>
  </div>
);
const Spinner = ({ dim }: { dim?: boolean }) => (
  <div className={`flex w-[14px] flex-col items-center justify-center gap-[5px] border-l bg-[#f4f4f4] ${dim ? "border-[#c8c8c8]" : "border-[#bbb]"}`}>
    <div className="rotate-180"><div className="flex"><Down small dim={dim} /></div></div>
    <div className="flex"><Down small dim={dim} /></div>
  </div>
);
const Field = ({ children, cls }: { children: ReactNode; cls: string }) => (
  <div className={`flex shrink-0 overflow-hidden rounded-[3px] border border-[#adadad] ${cls}`}>{children}</div>
);

/* --------------------------------------------------------------------- map */

let seed = 7;
const rnd = () => {
  seed = (seed * 16807) % 2147483647;
  return seed / 2147483647;
};
const parse = (s: string) => s.trim().split(/\s+/).map((p) => p.split(",").map(Number));
const rough = (s: string, closed: boolean, amp: number) => {
  const p = parse(s);
  let d = `M${p[0][0]} ${p[0][1]}`;
  const n = closed ? p.length : p.length - 1;
  for (let i = 0; i < n; i++) {
    const a = p[i];
    const b = p[(i + 1) % p.length];
    const len = Math.hypot(b[0] - a[0], b[1] - a[1]);
    const k = Math.max(1, Math.round(len / 5));
    for (let j = 1; j <= k; j++) {
      const m = j === k ? 0 : amp;
      d += `L${(a[0] + ((b[0] - a[0]) * j) / k + (rnd() - 0.5) * 2 * m).toFixed(1)} ${(a[1] + ((b[1] - a[1]) * j) / k + (rnd() - 0.5) * 2 * m).toFixed(1)}`;
    }
  }
  return closed ? d + "Z" : d;
};
const specks = (list: string) => {
  let d = "";
  parse(list).forEach(([x, y, rx, ry, n]) => {
    if (rx === undefined) {
      d += `M${x} ${y}l2 1.500`;
      return;
    }
    for (let i = 0; i < n; i++) {
      const px = x + (rnd() - 0.5) * 2 * rx;
      const py = y + (rnd() - 0.5) * 2 * ry;
      d += `M${px.toFixed(1)} ${py.toFixed(1)}l${(rnd() * 6 - 3).toFixed(1)} ${(rnd() * 6 - 1).toFixed(1)}`;
    }
  });
  return d;
};

type Sheet = { x: number; y: number; land: string[]; lines: string[]; dots: string; specks: string };

const sheets: Sheet[] = [
  {
    x: 563,
    y: 4,
    land: [
      "220,402 247,399 256,388 263,398 273,396 290,388 300,390 330,408 368,430 405,440 416,436 428,434 440,418 436,402 445,402 455,412 462,428 460,440 448,460 444,470 441,490 438,510 444,540 452,560 458,570 474,570 479,585 476,600 490,602 486,622 480,636 470,655 456,682 450,690 452,705 440,722 428,728 400,742 385,745 372,758 362,762 357,775 358,790 367,794 352,815 348,832 334,848 338,862 350,875 358,900 362,930 378,934 368,942 372,975 382,990 385,1010 405,1030 425,1040 445,1048 457,1040 445,1022 450,1010 462,1015 475,995 490,990 515,992 540,1000 560,1022 570,1035 565,1060 575,1070 595,1072 605,1055 592,1035 603,1025 615,1045 640,1050 670,1058 692,1072 670,1072 640,1080 635,1110 655,1115 665,1140 663,1162 680,1160 710,1165 718,1195 710,1238 690,1238 675,1200 655,1193 635,1178 605,1172 600,1140 585,1125 580,1110 550,1085 535,1080 525,1070 510,1055 490,1045 490,1070 500,1100 517,1130 515,1145 500,1148 490,1145 490,1130 485,1110 470,1080 450,1060 430,1063 420,1053 385,1045 370,1055 350,1055 340,1060 342,1075 310,1090 295,1088 288,1070 265,1050 245,1052 232,1065 223,1060 228,1030 220,1000 240,985 258,975 268,960 265,940 270,932 240,930 230,920 218,925 222,950 222,972 200,975 195,960 178,938 165,930 152,915 145,885 138,860 126,835 124,810 125,780 120,765 105,765 105,712 125,700 140,720 155,740 157,750 180,750 195,738 200,725 188,722 184,690 182,660 185,640 200,625 198,600 200,570 195,548 188,540 190,520 202,500 202,485 208,460 215,430",
      "392,895 410,888 425,900 418,930 412,945 403,935 408,915",
      "330,288 345,284 354,292 350,300 335,297", "402,262 412,258 418,264 410,270", "306,318 311,315 314,330 308,333", "314,355 330,353 345,352 335,358 318,358", "395,362 400,345 410,336 416,345 405,352", "388,98 396,84 402,88 396,100", "405,148 415,132 419,138 412,150", "434,396 440,394 441,406 436,406",
      "145,1050 160,1058 180,1065 186,1058 184,1075 165,1070 152,1060", "462,938 475,934 480,938", "435,915 450,920 455,930 435,928", "405,1003 430,1018 450,1040 425,1028", "418,745 435,725 445,718 428,745",
    ],
    lines: [
      "273,396 272,450 270,482", "270,482 240,492 215,512 207,492", "275,408 290,402 345,435 343,465 325,498 340,522 325,525 300,522 295,525 290,498 270,482", "340,522 372,545 442,541", "372,545 360,565 355,580 358,605 360,632 325,655", "295,525 275,560 268,585 245,595 220,580 218,560 205,548", "215,512 212,530 206,548", "268,585 300,592 330,575 355,578", "268,585 250,597 248,625 262,640 264,672 262,700 248,715 247,730", "248,625 228,630 222,660 205,685 210,722", "203,627 213,630 218,662", "262,640 272,625 275,615 300,612 355,605", "264,672 320,665 325,655 335,668 338,700 320,715 322,745 340,768", "335,668 355,670 385,698 435,682 456,682", "435,682 400,725 340,768 320,788", "195,727 230,728 247,730 262,742 300,742 305,762 320,788 330,835 325,865 326,912 300,920", "262,742 265,770 240,780 225,780 222,775 205,792 190,790 175,808 163,825 165,842 190,865 240,858 275,868 300,860 325,868", "225,780 240,800 244,860", "125,785 160,780 175,808", "190,865 200,905 210,912", "200,905 180,920", "275,868 270,895 230,925", "326,912 330,935 345,955 365,985 368,1005 345,1028 315,1040 285,1018 288,995 275,975", "326,912 290,928 270,935", "295,930 295,955 310,970 315,990 325,985 328,960", "283,940 290,970", "225,1000 255,1022 285,1018", "315,1040 345,1052 380,1045", "334,848 325,868", "462,1040 485,1015 530,1030 568,1052", "635,1108 620,1115 600,1138", "605,1170 660,1172 675,1195", "445,1048 460,1035 525,1045",
    ],
    dots: "297,392 422,434 464,444 446,480 203,482 197,552 196,600 184,705 479,636 366,758 148,898 166,930 220,940 265,942 376,985 466,998 552,984 548,1003 556,1012 712,1034 436,925 420,128 424,132 408,144 400,155 394,152 397,96 264,968 745,1090 640,1103 212,455 187,660 515,1128",
    specks: "408,48 405,70,3,3,3 438,203 445,326 350,277 309,340 112,780,6,14,9 130,705,6,10,12 137,718,5,8,10 438,735,10,12,10 440,915,12,10,16 422,976 393,996 270,950,8,14,18 285,960,10,14,8 655,1045,40,7,22 600,1025,8,6,8 548,968,10,4,6 510,990,30,3,8 126,830,3,20,8 200,505,4,10,6 208,1027 225,930,12,5,8 530,978 310,975,12,12,10 265,1083,18,6,10 740,1022,15,4,6",
  },
  {
    x: 583,
    y: 324,
    land: [
      "655,65 670,62 690,82 697,100 690,130 665,138 645,130 643,120 655,105 658,85",
      "335,145 355,138 375,145 378,158 370,175 360,188 340,172",
      "122,155 130,142 165,142 205,145 235,150 245,152 260,175 285,190 295,202 288,215 292,240 296,265 280,295 250,320 235,312 215,290 205,255 190,230 185,205 170,190 145,170 135,155",
      "492,195 510,200 525,225 550,255 530,240 505,222", "532,272 545,280 590,298 620,320 640,350 648,388 630,370 600,345 570,322 545,330 518,368 535,310", "578,258 592,262 608,305 590,290",
      "358,270 375,265 380,275 370,310 358,333 352,310", "418,290 435,282 458,300 455,318 430,308", "390,265 403,280 400,287", "130,2 160,2 162,12 150,18 135,14",
      "340,370 355,366 380,380 400,385 435,410 475,408 490,428 520,415 515,465 470,495 465,515 425,532 385,545 362,552 350,572 345,560 355,520 368,490 362,440 375,410 370,390 345,387",
      "430,545 450,530 462,545 450,570 430,578", "675,275 700,280 760,275 800,275 820,300 845,315 838,340 845,380 840,420 862,450 870,465 850,478 815,480 808,460 775,452 765,430 755,405 775,395 770,385 735,360 700,335 680,305",
      "870,520 885,525 890,535 875,532", "678,540 700,530 708,540 680,550", "605,165 630,175 665,185 665,190 635,182", "595,460 605,455 605,468", "265,340 275,350 270,355", "275,372 290,370 290,378", "40,550 60,545 80,558 50,565", "58,310 80,325 125,345 120,355 85,350 65,340", "65,360 85,385 75,398 65,380", "745,395 760,410 755,430",
    ],
    lines: ["203,150 193,175 250,205 251,320", "345,372 378,392 380,420 388,465 402,495 385,525 355,555", "388,465 400,462 450,465 475,460 490,450 515,420", "400,385 412,400 430,412", "388,465 410,440 430,430 440,415", "690,312 720,312 740,322 757,330 780,320 795,322", "800,308 795,350 812,372 805,410 815,430 810,480"],
    dots: "332,150 150,142 358,186 362,270 373,270 350,305 452,298 448,313 586,266 586,300 400,388 445,418 364,438 350,567 520,455 455,538 432,570 458,555 487,424 712,400 718,410 682,298 858,462 811,482 697,508 845,572 857,580 627,466 500,214 276,295 637,228 662,212 240,128 582,142 455,168 688,130",
    specks: "95,100,12,8,10 230,135,15,5,8 345,210 317,224 368,225 366,240 137,261 348,345 285,355,18,20,14 315,408 525,410,20,12,12 515,450,8,25,12 585,350,20,14,10 690,365,20,8,12 645,295,18,12,8 620,180,30,10,14 695,265,12,8,14 785,265,10,6,10 735,375,18,14,14 755,405,12,20,20 850,335,5,18,8 880,485,12,12,10 909,526 620,465,5,5,5 590,475,18,10,8 100,320,40,25,22 75,370,20,30,40 45,430,15,6,18 95,437,8,5,5 190,435,10,5,6 215,490,45,40,30 220,518,6,6,6 115,538 30,480,12,45,40 228,325,10,5,6 240,345 545,463 345,360 655,285,8,8,4 360,15 575,595 420,550,4,15,6",
  },
  {
    x: 663,
    y: 394,
    land: [
      "440,205 455,215 460,235 480,245 500,240 515,225 535,232 542,260 542,320 560,340 572,365 572,385 558,390 560,400 575,430 565,432 550,405 535,390 530,372 535,395 540,415 520,410 503,400 505,380 500,350 510,335 508,320 490,290 480,285 465,300 450,297 450,260",
      "445,188 470,185 482,200 470,222 455,215",
      "240,345 255,330 250,315 255,300 285,285 330,292 335,320 315,362 300,375 300,385 280,430 275,480 295,505 300,515 290,545 255,555 240,525 205,500 180,485 172,440 205,425 240,400 235,375",
      "385,275 400,265 405,300 400,350 380,385 345,415 330,470 302,503 300,490 315,420 345,365 365,330 380,305", "388,262 402,248 404,256 396,270",
      "370,425 385,420 400,412 425,400 460,405 475,425 475,455 440,465 425,480 385,475 375,485 362,482 372,470", "322,530 345,515 357,530 348,550 330,545", "487,535 500,530 512,545 500,552", "612,365 625,360 632,385 625,405 635,430 622,440 615,400", "672,435 685,418 698,445 685,458 668,440", "665,460 678,462 670,478", "355,250 365,248 370,262 358,260", "205,320 222,330 215,360 195,355",
    ],
    lines: ["570,335 545,350 520,350 525,370", "275,368 300,366 300,380 290,378 285,400 255,445 205,500", "275,368 288,388", "530,350 520,385"],
    dots: "207,356 213,336 343,525 350,540 498,530 505,548 605,363 625,370 608,396 633,432 595,458 662,492 677,512 565,352 540,385 565,412 308,372 212,425 320,410 307,458 378,386 398,412 450,406 352,612 456,620 336,615 340,445 558,420",
    specks: "400,382,10,10,12 435,395,45,5,20 480,408 540,385,18,22,18 620,440,22,14,30 665,435,10,4,5 700,475 690,460,8,14,8 625,470 670,315 635,318,8,6,6 548,432 295,552 290,598 317,582 386,493 345,275,8,6,8 10,475,6,5,8 25,460 610,400,10,30,18 10,290,5,8,3 72,238 75,200 40,160,12,10,8",
  },
  {
    x: 663,
    y: 524,
    land: [
      "595,65 618,72 640,88 660,95 672,112 690,140 705,135 705,150 722,185 718,205 700,215 690,235 720,240 735,245 725,270 738,290 725,312 735,340 752,350 758,380 758,420 738,445 710,452 705,465 695,470 708,490 712,520 708,535 700,545 693,520 688,470 675,455 655,420 655,400 632,412 612,440 600,470 592,490 600,505 620,525 635,570 632,605 595,650 580,650 565,630 575,605 562,580 550,610 525,608 470,590 435,570 405,540 402,490 392,470 398,440 420,430 440,427 430,405 420,390 408,365 395,355 370,350 350,330 325,345 320,360 300,375 318,400 305,398 280,365 270,355 265,375 240,390 230,385 235,350 205,345 180,360 165,385 160,410 152,440 145,465 130,468 105,455 102,435 120,410 135,375 132,345 150,312 190,300 235,295 255,280 250,260 265,240 300,235 315,215 340,225 352,222 370,240 380,290 350,312 380,295 410,285 435,280 432,250 450,230 470,232 500,245 505,215 505,180 515,172 540,185 555,195 562,165 570,178 605,172 610,130 598,105 592,85",
      "95,505 115,490 135,500 162,503 150,525 130,535 105,525", "632,430 642,425 645,460 638,462 635,445", "583,675 595,672 592,680", "228,400 240,392 248,403 238,410", "715,460 725,475 718,478", "0,585 20,585 40,590 30,605 0,612",
    ],
    lines: [
      "600,110 640,108 640,145 630,190 632,213 572,218", "640,120 660,150 675,190 680,235 715,262", "640,125 665,98", "570,178 572,218 572,235 590,280 595,315 595,360 575,372 565,390 540,395 515,382 500,350 485,320 470,290 480,275 485,252 510,250 515,232 572,230", "592,314 722,315", "632,315 635,335 650,360 665,340 665,355 655,385 655,410", "698,315 710,350 718,412 670,440", "575,372 607,374 610,418 632,418", "575,372 572,400 575,440 572,465 560,490", "435,265 465,265 475,275 470,292", "470,292 440,283 430,300 418,310 418,322 400,330 395,355", "510,362 490,365 465,360 440,378 425,392", "462,362 460,400 450,420", "450,425 465,420 470,440 500,455 495,430 510,440 510,490 525,492 560,490", "402,487 475,490 480,470 495,475 500,492 520,500", "490,505 485,530 480,545 440,545 455,565 520,590 545,598 550,580", "490,505 555,488 565,530 550,535 575,555 570,585", "565,532 600,535 610,570 605,610 585,650", "510,515 562,517", "435,565 470,585 545,598", "150,390 160,370 200,325 245,320 280,310 285,280 335,282", "335,225 335,305 350,315", "245,320 265,340", "108,430 135,430 150,388 165,387", "110,492 125,490 125,510 108,510 110,492"],
    dots: "164,308 252,284 227,350 237,402 107,453 404,370 420,416 406,533 572,630 635,590 613,620 594,495 606,512 662,438 702,533 614,448 728,330 374,298 708,210 80,498 98,505 117,488 142,530 122,538 101,586 153,425 667,445",
    specks: "70,500,20,8,18 45,485,6,8,5 165,470,10,12,7 60,555 80,578,18,8,12 60,590,12,8,8 595,665,10,6,6 655,335,8,6,4 710,465,10,8,10 722,280,12,36,34 720,240,12,8,10 700,545 635,420,14,6,6 425,415,8,5,10 402,406 285,372,12,8,8 165,400,10,12,6 340,317,10,5,8 200,295,50,2,6 10,570,8,6,6",
  },
  {
    x: 453,
    y: 414,
    land: [
      "398,165 407,180 405,205 400,230 412,250 425,290 405,310 370,322 360,350 310,365 295,385 292,405 270,440 250,470 205,485 190,515 155,545 130,550 122,570 80,595 85,565 115,520 145,495 155,480 180,465 205,462 235,425 265,395 295,350 315,335 330,315 350,310 375,285 385,250 380,235 388,195",
      "435,288 445,280 470,285 450,298 438,298", "86,598 98,600 97,612 88,614", "45,640 55,630 62,650 52,668 44,655", "248,778 262,776 264,784 252,786", "595,925 605,910 635,910 640,920 668,925 655,940 625,930", "435,1055 455,1035 485,1020 500,1012 510,1030 480,1035 455,1050", "392,1078 398,1080 402,1104 396,1100", "545,870 552,868 550,885", "578,985 590,978 600,985 590,995", "610,240 618,238 616,248", "435,158 452,150 446,166",
    ],
    lines: [],
    dots: "482,924 558,882 732,917 593,928 590,987 540,1035 393,1104 487,1018 500,1022 455,1045 708,829 735,782",
    specks: "372,200,10,30,30 370,240,10,15,22 415,200,14,35,30 345,295,18,10,20 300,355,10,12,14 185,462,22,4,12 300,375,14,5,12 265,450,12,15,8 240,410,10,10,6 390,322,20,5,10 415,258,8,12,12 440,158,20,12,16 487,167,8,5,6 505,188 580,162,8,5,7 507,268,8,6,6 480,287 478,20 515,40,12,12,10 490,75,35,25,26 645,412,10,6,10 610,417 655,405 582,463 225,518 122,595 80,655,3,15,5 60,620,14,12,14 92,707,3,4,3 262,675 283,648 250,765,4,10,5 246,798 261,850 208,885,8,8,6 245,895,14,14,7 690,800 672,815 690,830,10,8,14 570,862,12,5,5 600,900,14,10,16 535,905,12,10,10 465,936,8,4,8 428,946,10,5,7 515,960,14,12,10 630,940,22,8,16 690,915,22,8,14 590,962,12,6,8 612,965,5,4,5 500,998,8,4,5 548,1020,12,20,10 510,1035,10,14,20 465,1065,8,12,12 445,1080,6,8,6 390,1085,8,15,14 440,1055,8,5,8 725,905,14,10,8",
  },
];

const PhilippinesMap = () => {
  seed = 7;
  return (
    <svg width="1381" height="805" viewBox="0 0 1381 805" className="block shrink-0">
      {sheets.map((s, i) => (
        <g key={`d${i}`} transform={`translate(${s.x - 1} ${s.y - 1}) scale(.33333)`} stroke="#2b2b2b">
          {parse(s.dots).map(([x, y], j) => (
            <g key={j}>
              <circle cx={x} cy={y} r="10.300" fill="#7ab26c" strokeWidth="2.600" />
              <circle cx={x} cy={y} r="2" fill="#222" stroke="none" />
            </g>
          ))}
        </g>
      ))}
      {sheets.map((s, i) => (
        <g key={i} transform={`translate(${s.x - 1} ${s.y - 1}) scale(.33333)`} stroke="#262626" strokeLinejoin="round" strokeLinecap="round">
          {s.land.map((p, j) => <path key={j} d={rough(p, true, 1.9)} fill="#f4a6b3" strokeWidth="3.400" />)}
          {s.lines.map((p, j) => <path key={j} d={rough(p, false, 0.8)} fill="none" strokeWidth="3.100" />)}
          <path d={specks(s.specks)} fill="none" strokeWidth="3.300" />
        </g>
      ))}
    </svg>
  );
};

/* -------------------------------------------------------------------- page */

const menus = [["Pro", "j", "ect"], ["", "E", "dit"], ["", "V", "iew"], ["", "L", "ayer"], ["", "S", "ettings"], ["", "P", "lugins"], ["Vect", "o", "r"], ["", "R", "aster"], ["", "D", "atabase"], ["", "W", "eb"], ["", "M", "esh"], ["Pro", "c", "essing"], ["", "H", "elp"]];

const Check = ({ on = true }: { on?: boolean }) => (
  <div className="flex size-[14px] shrink-0 items-center justify-center border border-[#b0b0b0] bg-white">
    {on && <svg width="10" height="10" viewBox="0 0 10 10"><path d="M1 5l2.800 3.800L8.500.8" fill="none" stroke="#000" strokeWidth="1.800" /></svg>}
  </div>
);
const DockButtons = () => (
  <div className="flex gap-[3px]">
    <svg width="11" height="11" viewBox="0 0 11 11" fill="none" stroke="#555"><rect x=".5" y=".5" width="10" height="10" rx="2" /><rect x="4.500" y="2.500" width="4" height="4" rx="1" /><rect x="2.500" y="4.500" width="4" height="4" rx="1" fill="#eee" /></svg>
    <svg width="11" height="11" viewBox="0 0 11 11" fill="none" stroke="#555"><rect x=".5" y=".5" width="10" height="10" rx="2" /><path d="M3 3l5 5M8 3L3 8" strokeWidth="1.900" /></svg>
  </div>
);
const Grip = () => (
  <div className="h-[19px] w-[3px] bg-[radial-gradient(circle,#b5b5b5_0.700px,transparent_1px)] bg-[length:3px_3px]" />
);
const LayerRow = ({ label, sel, sym, chip }: { label: string; sel?: boolean; sym: ReactNode; chip?: ReactNode }) => (
  <div className={`flex h-[19px] items-center pl-[23px] ${sel ? "bg-[#308cc6]" : ""}`}>
    <Check />
    <div className="ml-[6px] flex size-4 items-center justify-center">{sym}</div>
    <span className={`ml-[6px] text-[13px] font-bold whitespace-nowrap ${sel ? "text-white underline underline-offset-[3px]" : "text-black"}`}>{label}</span>
    <div className="ml-auto flex h-[17px]">{chip}</div>
  </div>
);

export default function App() {
  return (
    <div className="flex h-[1055px] w-[1922px] flex-col overflow-hidden border-t border-r border-b border-l border-[#8c8c8c] bg-[#eeeeee] font-['DejaVu_Sans',sans-serif] text-[13px] leading-none text-black">
      {/* title bar */}
      <div className="relative flex h-[37px] shrink-0 items-center justify-center border-b border-[#222] bg-[#363636]">
        <span className="font-['Noto_Sans',sans-serif] text-[12.300px] font-bold whitespace-nowrap text-[#f4f4f4]">*Untitled Project - QGIS [Bite-sized QGIS]</span>
        <div className="absolute top-0 right-[8px] flex h-[36px] items-center">
          <div className="mt-[5px] mr-[27px] h-[2px] w-[8px] bg-white" />
          <div className="mr-[22px] size-[6px] border-2 border-white" />
          <svg width="19" height="19" viewBox="0 0 19 19"><circle cx="9.500" cy="9.500" r="9.300" fill="#f38a2c" /><path d="M6.200 6.200l6.600 6.600M12.800 6.200l-6.600 6.600" stroke="#fff" strokeWidth="2.200" /></svg>
        </div>
      </div>
      {/* menu bar */}
      <div className="flex h-[22px] shrink-0 items-center gap-[15.100px] border-b border-[#cfcfcf] bg-[#efefef] pl-[10px]">
        {menus.map(([a, b, c]) => (
          <span key={a + b + c} className="whitespace-nowrap">{a}<span className="underline underline-offset-2">{b}</span>{c}</span>
        ))}
      </div>

      <Bar><Tools list="| new open save layout laymgr style | hand* panto zin zout zfull zsel zlayer z11 zprev znext view bmnew bm refresh | identify action>! select> selform> desel table abacus gear sigma* measure> tips text>" /></Bar>
      <Bar><Tools list="| edits~! pencil savee addpoly vertex>! attrs del cut copy paste undo redo | advdig movef>! rotf simp ring part fring dring dpart reshape offset splitv mergex sc1 sc1 join vals rotp>! | abc diag - abcpin abcred - abcp abce abcm abcr abcw | meta | python graph globe | help | tableload" /></Bar>
      <Bar>
        <Tools list="| magnet* snapall~ snapv~" />
        <Field cls="mr-[2px] ml-px h-6 w-[102px] bg-white"><span className="flex flex-1 items-center pl-1">2</span><Spinner /></Field>
        <Field cls="mr-[1px] h-[25px] w-[108px] items-center justify-between bg-linear-to-b from-[#fdfdfd] to-[#ededed] pr-[7px] pl-1"><span>px</span><Down /></Field>
        <Tools list="topo inter trace>" />
        <div className="ml-[1px] flex items-center"><Tools list="| db carp radio pin | gsearch paint | AD MO RO" /></div>
        <Field cls="mr-[1px] h-[23px] w-[70px] bg-[#f0f0f0]"><span className="flex flex-1 items-center pl-1 text-[#a8a8a8]">0.0</span><Spinner dim /></Field>
        <Tools list="SC ADJ P2 Tm Tp EX back | sh1>! sh2 sc1 join sh3 sh4>! sh5>! sh6>! sh7>! sh7 sh8>! sh9 sh10 sh12 sh11" />
      </Bar>
      <Bar h="h-[38px]"><Handle /><div className="flex items-center pl-[1.500px]"><Tools list="| chart" /></div></Bar>

      <div className="flex min-h-0 flex-1">
        {/* data source toolbar */}
        <div className="flex w-[39px] shrink-0 flex-col items-center border-r border-[#b4b4b4] bg-linear-to-r from-[#f9f9f9] to-[#ededed] pt-[6px]">
          <div className="h-[5px] w-[17px] bg-[radial-gradient(circle,#b5b5b5_0.700px,transparent_1px)] bg-[length:3px_3px]" />
          <div className="mt-[6px] flex flex-col gap-2 pl-[1px]">
            {["addlayer", "gpkg", "shp", "feather", "mem"].map((n) => <Svg key={n} n={n} />)}
          </div>
          <div className="mt-[8px] h-px w-5 bg-[#c9c9c9]" />
          <div className="mt-[7px] pl-[1px]"><Svg n="virt" /></div>
        </div>

        {/* layers dock */}
        <div className="flex w-[191px] shrink-0 flex-col pl-[1px]">
          <div className="flex h-[20px] items-center justify-between pt-[1px] pr-[2px] pl-[4px]"><span>Layers</span><DockButtons /></div>
          <div className="flex h-[31px] items-center gap-[9px] pl-[8px]">
            {["brush", "group", "eye", "filter", "eps"].map((n) => <Svg key={n} n={n} s={16} />)}
            <div className="-ml-[3px] flex"><Down /></div>
            <Svg n="expand" s={16} />
            <span className="ml-[5px] text-[16px] text-[#555]">»</span>
          </div>
          <div className="min-h-0 flex-1 border border-[#aeaeae] bg-white">
            <LayerRow
              sel
              label="Joined layer"
              sym={<div className="size-4 border border-[#9b84a5] bg-[#b69fba]" />}
              chip={<><div className="flex w-[17px] items-center justify-center bg-[#e9e9e9]"><svg width="14" height="12" viewBox="0 0 14 12" stroke="#888"><path d="M3.500 0v12M6 0v12M8.500 0v12M11 0v12" /><rect x="1.500" y="2.500" width="11" height="7" fill="#fff" /></svg></div><div className="ml-px w-[3px] border-x border-[#9ccbe8] bg-[#308cc6]" /></>}
            />
            <LayerRow label="Persons At Risk" sym={<div className="size-[7px] rounded-full border border-[#5c7f55] bg-[#82b573]" />} chip={<div className="w-[3px] bg-[#e6e6e6]" />} />
            <LayerRow label="PHL_provinces" sym={<div className="size-4 border border-[#6f4735] bg-[#a5715a]" />} chip={<div className="w-[3px] bg-[#e6e6e6]" />} />
          </div>
          <div className="mt-px flex h-[28px] items-start border-t border-[#b4b4b4]">
            <div className="-mt-px flex h-[27px] w-[67px] items-center justify-center rounded-b-[3px] border border-t-0 border-[#b0b0b0] bg-[#f7f7f7]">Layers</div>
            <div className="flex h-[25px] w-[77px] items-center justify-center rounded-b-[3px] border border-t-0 border-l-0 border-[#b8b8b8] bg-[#dadada]">Browser</div>
          </div>
        </div>
        <div className="flex w-[6px] shrink-0 items-center justify-center"><Grip /></div>

        {/* canvas */}
        <div className="mt-px flex w-[1383px] shrink-0 overflow-hidden border border-[#b0b0b0] bg-white"><PhilippinesMap /></div>
        <div className="flex w-[6px] shrink-0 items-center justify-center"><Grip /></div>

        {/* statistics dock */}
        <div className="flex min-w-0 flex-1 flex-col">
          <div className="flex h-[20px] items-center justify-between pt-[1px] pr-[2px] pl-[4px]"><span>Statistics</span><DockButtons /></div>
          <Field cls="h-[25px] items-center bg-linear-to-b from-[#fdfdfd] to-[#ededed] pr-[7px] pl-[6px]">
            <svg width="14" height="14" viewBox="0 0 14 14" fill="none" stroke="#999"><circle cx="2" cy="11" r="1.200" /><circle cx="4" cy="4" r="1.200" /><circle cx="11" cy="1.700" r="1.200" /></svg>
            <span className="ml-[4px] flex-1">Persons At Risk</span>
            <Down />
          </Field>
          <div className="mt-[3px] flex h-[25px] gap-[6px]">
            <Field cls="flex-1 bg-white"><div className="ml-auto flex w-5 items-center justify-center border-l border-[#bbb] bg-[#f4f4f4]"><Down /></div></Field>
            <Field cls="w-[25px] justify-center bg-linear-to-b from-[#fdfdfd] to-[#ededed] pt-[1px] font-['DejaVu_Serif',serif] text-[19px] text-[#653a72]">ε</Field>
          </div>
          <div className="mt-[3px] flex min-h-0 flex-1 flex-col border border-[#aeaeae] bg-white">
            <div className="flex h-[21px] bg-[#eeeeee]">
              <div className="flex w-[100px] items-center justify-center border-r border-b border-r-[#ccc] border-b-[#aaa] bg-linear-to-b from-[#fcfcfc] to-[#ececec]">Statistic</div>
              <div className="flex w-[100px] items-center justify-center border-b border-[#aaa] bg-linear-to-b from-[#fcfcfc] to-[#ececec]">Value</div>
            </div>
          </div>
          <div className="flex h-[29px] items-center">
            <Check on={false} />
            <span className="ml-[5px]">Selected features only</span>
            <div className="ml-auto brightness-90"><Svg n="copy" s={15} /></div>
            <div className="ml-[12px]"><Svg n="refresh" s={15} /></div>
            <div className="mt-[1px] ml-[8px] flex h-[24px] w-[28px] items-center justify-center rounded-[3px] border border-[#b0b0b0] bg-linear-to-b from-[#fdfdfd] to-[#ededed] pt-1">...<div className="mt-2 flex"><Down small /></div></div>
          </div>
          <div className="flex h-[28px] items-start border-t border-[#b4b4b4]">
            <div className="flex h-[24px] w-[110px] items-center justify-center rounded-b-[3px] border border-t-0 border-[#b8b8b8] bg-[#dadada]">Layer Styling</div>
            <div className="-mt-px flex h-[27px] w-[84px] items-center justify-center rounded-b-[3px] border border-t-0 border-l-0 border-[#b0b0b0] bg-[#f7f7f7]">Statistics</div>
          </div>
        </div>
      </div>

      {/* status bar */}
      <div className="flex h-[31px] shrink-0 items-center pl-[4px] text-[11px]">
        <div className="flex h-[25px] w-[270px] shrink-0 items-center rounded-[3px] border border-[#a8a8a8] bg-white pr-[8px] pl-[8px] text-[13px]">
          <svg width="14" height="14" viewBox="0 0 14 14" fill="none" stroke="#999" strokeWidth="1.500"><circle cx="5.500" cy="5.500" r="4.500" /><path d="M9 9l4 4" /></svg>
          <span className="ml-[6px] flex-1">join att</span>
          <svg width="13" height="10" viewBox="0 0 13 10"><path d="M4 0h9v10H4L0 5z" fill="#8f8f8f" /><path d="M5.500 2.500l5 5M10.500 2.500l-5 5" stroke="#fff" /></svg>
        </div>
        <span className="ml-[8px] w-[771px] shrink-0 whitespace-nowrap">0 feature(s) selected on layer Persons At Risk.</span>
        <span className="w-[64px] shrink-0">Coordinate</span>
        <Field cls="h-[22px] w-[90px] items-center justify-center bg-white">128.42,9.23</Field>
        <svg width="16" height="16" viewBox="0 0 16 16" className="ml-[4px] shrink-0" fill="none" stroke="#333"><path d="M2 3l6 10M5 2l6 10M1 6l8 7" strokeWidth="1.400" /><circle cx="10" cy="11" r="3" fill="#ddd" /><path d="M9 5l5-4M11 7l4-2" /></svg>
        <span className="ml-[13px] w-[33px] shrink-0">Scale</span>
        <Field cls="h-6 w-[96px] bg-white"><span className="flex flex-1 items-center pl-[3px]">1:7708949</span><div className="flex w-5 items-center justify-center border-l border-[#bbb] bg-[#f4f4f4]"><Down /></div></Field>
        <svg width="12" height="15" viewBox="0 0 12 15" className="ml-[12px] shrink-0"><path d="M3 7V4a3 3 0 0 1 6 0v3" fill="none" stroke="#666" strokeWidth="1.800" /><rect y="6" width="12" height="9" rx="1.500" fill="#666" /></svg>
        <span className="ml-[9px] w-[55px] shrink-0">Magnifier</span>
        <Field cls="h-6 w-[97px] bg-white"><span className="flex flex-1 items-center pl-[4px]">100%</span><Spinner /></Field>
        <span className="ml-[10px] w-[55px] shrink-0">Rotation</span>
        <Field cls="ml-[1px] h-6 w-[93px] bg-white"><span className="flex flex-1 items-center pl-[4px]">0.0 °</span><Spinner /></Field>
        <div className="ml-[7px]"><Check /></div>
        <span className="ml-[5px] w-[42px] shrink-0">Render</span>
        <svg width="15" height="15" viewBox="0 0 15 15" className="ml-[13px] shrink-0" fill="none" stroke="#888"><circle cx="7.500" cy="7.500" r="6.500" /><ellipse cx="7.500" cy="7.500" rx="3" ry="6.500" /><path d="M1 5h13M1 10h13M7.500 1v13" /></svg>
        <span className="ml-[3px] whitespace-nowrap">EPSG:4326</span>
        <svg width="16" height="15" viewBox="0 0 16 15" className="ml-[23px] shrink-0"><path d="M8 0a7.500 6.500 0 0 1 6 11v4l-4-2A7.500 6.500 0 1 1 8 0z" fill="#666" /><path d="M4 6.500h2M7 6.500h2M10 6.500h2" stroke="#fff" strokeWidth="1.600" /></svg>
      </div>
    </div>
  );
}
